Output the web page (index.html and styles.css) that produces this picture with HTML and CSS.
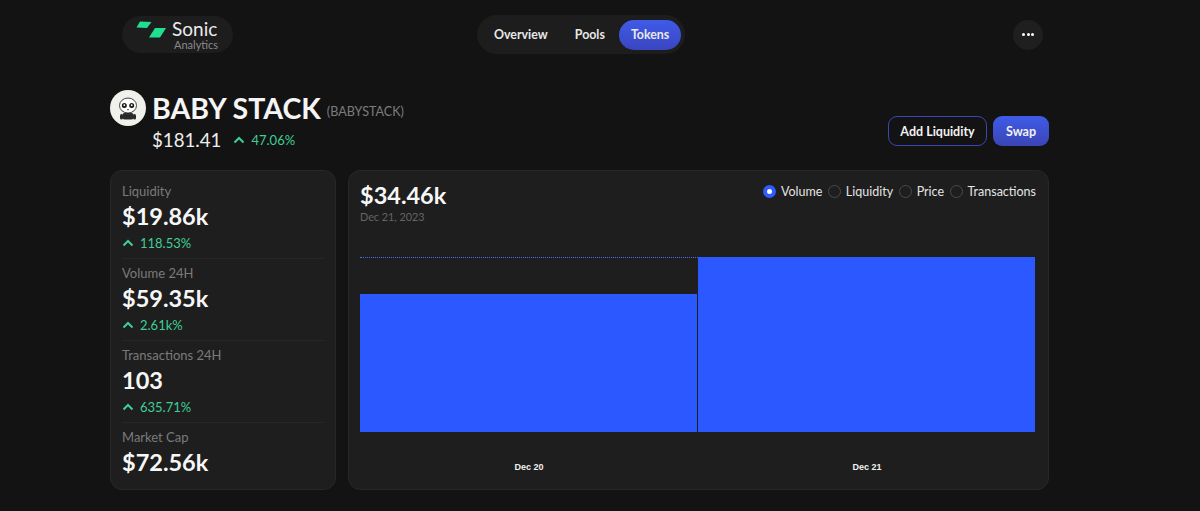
FILE: index.html
```html
<!DOCTYPE html>
<html lang="en">
  <head>
    <meta charset="UTF-8" />
    <meta name="viewport" content="width=device-width, initial-scale=1.0" />
    <title>Sonic Analytics - BABY STACK</title>
    <link rel="stylesheet" href="styles.css">
  </head>
  <body>
    <header class="topbar">
      <a class="logo" href="#">
        <svg class="logo-mark" viewBox="0 0 30 17" width="30" height="17">
          <polygon points="4,0.5 15.5,1 11,7 0.5,6.5" fill="#1fe08f" />
          <polygon points="19,7 30,7 24,16.5 13,16.5" fill="#1fe08f" />
        </svg>
        <span class="logo-text">
          <span class="logo-name">Sonic</span>
          <span class="logo-sub">Analytics</span>
        </span>
      </a>

      <nav class="nav">
        <a href="#" class="nav-item">Overview</a>
        <a href="#" class="nav-item">Pools</a>
        <a href="#" class="nav-item active">Tokens</a>
      </nav>

      <button class="more" aria-label="More">
        <span class="dot"></span><span class="dot"></span><span class="dot"></span>
      </button>
    </header>

    <main class="page">
      <section class="token-head">
        <div>
          <div class="token-title">
            <span class="avatar">
              <svg viewBox="0 0 36 36" width="36" height="36">
                <circle cx="18" cy="18" r="18" fill="#f1f1ec" />
                <rect x="12.5" y="23" width="11" height="6.5" rx="2" fill="#2a2a2a" />
                <rect x="10" y="24" width="3" height="5.5" rx="1.5" fill="#2a2a2a" />
                <rect x="23" y="24" width="3" height="5.5" rx="1.5" fill="#2a2a2a" />
                <ellipse cx="18" cy="15.5" rx="8.5" ry="7.5" fill="#fff" stroke="#444" stroke-width="1" />
                <circle cx="14.3" cy="15.5" r="2.5" fill="#1c1c1c" />
                <circle cx="21.7" cy="15.5" r="2.5" fill="#1c1c1c" />
                <circle cx="14.3" cy="15.2" r="0.9" fill="#fff" />
                <circle cx="21.7" cy="15.2" r="0.9" fill="#fff" />
                <rect x="17.2" y="19" width="1.6" height="1.2" fill="#555" />
              </svg>
            </span>
            <h1>BABY STACK</h1>
            <span class="symbol">(BABYSTACK)</span>
          </div>
          <div class="token-price">
            <span class="price">$181.41</span>
            <span class="change">
              <svg class="chevron" viewBox="0 0 12 8" width="12" height="8"><path d="M1.5 6.5 6 2l4.5 4.5" /></svg>
              47.06%
            </span>
          </div>
        </div>
        <div class="actions">
          <a href="#" class="btn btn-outline">Add Liquidity</a>
          <a href="#" class="btn btn-solid">Swap</a>
        </div>
      </section>

      <section class="content">
        <aside class="card stats">
          <div class="stat">
            <div class="stat-label">Liquidity</div>
            <div class="stat-value">$19.86k</div>
            <div class="change">
              <svg class="chevron" viewBox="0 0 12 8" width="12" height="8"><path d="M1.5 6.5 6 2l4.5 4.5" /></svg>
              118.53%
            </div>
          </div>
          <div class="stat">
            <div class="stat-label">Volume 24H</div>
            <div class="stat-value">$59.35k</div>
            <div class="change">
              <svg class="chevron" viewBox="0 0 12 8" width="12" height="8"><path d="M1.5 6.5 6 2l4.5 4.5" /></svg>
              2.61k%
            </div>
          </div>
          <div class="stat">
            <div class="stat-label">Transactions 24H</div>
            <div class="stat-value">103</div>
            <div class="change">
              <svg class="chevron" viewBox="0 0 12 8" width="12" height="8"><path d="M1.5 6.5 6 2l4.5 4.5" /></svg>
              635.71%
            </div>
          </div>
          <div class="stat">
            <div class="stat-label">Market Cap</div>
            <div class="stat-value">$72.56k</div>
          </div>
        </aside>

        <div class="card chart-card">
          <div class="chart-head">
            <div>
              <div class="chart-value">$34.46k</div>
              <div class="chart-date">Dec 21, 2023</div>
            </div>
            <div class="radios">
              <label class="radio"><span class="radio-dot on"></span>Volume</label>
              <label class="radio"><span class="radio-dot"></span>Liquidity</label>
              <label class="radio"><span class="radio-dot"></span>Price</label>
              <label class="radio"><span class="radio-dot"></span>Transactions</label>
            </div>
          </div>

          <div class="plot">
            <div class="peak-line"></div>
            <div class="bar" style="height: 138px"></div>
            <div class="bar" style="height: 175px"></div>
          </div>
          <div class="axis">
            <span>Dec 20</span>
            <span>Dec 21</span>
          </div>
        </div>
      </section>
    </main>
  </body>
</html>
```

FILE: styles.css
```css
* {
  box-sizing: border-box;
}
body {
  margin: 0;
  padding: 0;
  height: 511px;
  overflow: hidden;
  background-color: #131313;
  color: #f5f5f5;
  font-family: "Lato", "Noto Sans", sans-serif;
}
a {
  color: inherit;
  text-decoration: none;
}
.topbar {
  display: grid;
  grid-template-columns: 355px 536px 30px;
  align-items: center;
  height: 69px;
  padding-left: 122px;
}
.logo {
  display: flex;
  align-items: flex-start;
  gap: 6px;
  width: 111px;
  height: 37px;
  padding: 4px 0 0 14px;
  border-radius: 19px;
  background: #1d1d1d;
}
.logo-mark {
  margin-top: 1px;
}
.logo-text {
  display: flex;
  flex-direction: column;
}
.logo-name {
  font-size: 19px;
  line-height: 18px;
  color: #ececec;
}
.logo-sub {
  font-size: 11px;
  line-height: 11px;
  margin-top: 1px;
  color: #8a8a8a;
  margin-left: 2px;
}
.nav {
  display: flex;
  align-items: center;
  gap: 1px;
  width: 208px;
  height: 39px;
  padding: 0 4px;
  border-radius: 20px;
  background: #1d1d1d;
}
.nav-item {
  display: flex;
  align-items: center;
  justify-content: center;
  height: 30px;
  padding: 0 13px;
  border-radius: 15px;
  font-size: 12.4px;
  font-weight: 700;
  color: #e8e8e8;
}
.active {
  background: linear-gradient(#3f5be8, #3a45c0);
  padding: 0 12px;
}
.more {
  display: flex;
  align-items: center;
  justify-content: center;
  gap: 1.5px;
  width: 30px;
  height: 30px;
  padding: 0;
  border: none;
  border-radius: 50%;
  background: #1f1f1f;
}
.dot {
  width: 3px;
  height: 3px;
  border-radius: 50%;
  background: #fff;
}
.page {
  width: 939px;
  margin: 0 0 0 110px;
}
.token-head {
  display: flex;
  justify-content: space-between;
  height: 77px;
  padding-top: 21px;
}
.token-title {
  display: flex;
  align-items: center;
  gap: 6px;
  height: 36px;
}
.avatar {
  display: block;
  width: 36px;
  height: 36px;
}
h1 {
  margin: 0;
  font-size: 28.5px;
  line-height: 36px;
  font-weight: 700;
  color: #f5f5f5;
}
.symbol {
  margin-top: 6px;
  font-size: 12.6px;
  color: #7c7c7c;
}
.token-price {
  display: flex;
  align-items: center;
  gap: 12px;
  margin: 2px 0 0 42px;
}
.price {
  font-size: 18.7px;
  line-height: 24px;
  color: #eeeeee;
}
.change {
  display: flex;
  align-items: center;
  gap: 6px;
  font-size: 13px;
  line-height: 16px;
  color: #3ecf96;
}
.chevron {
  fill: none;
  stroke: #3ecf96;
  stroke-width: 2;
}
.actions {
  display: flex;
  align-self: flex-end;
  gap: 6px;
}
.btn {
  display: flex;
  align-items: center;
  justify-content: center;
  height: 30px;
  border-radius: 9px;
  font-size: 12.5px;
  font-weight: 700;
  color: #f2f2f2;
}
.btn-outline {
  width: 99px;
  border: 1px solid #3a46b8;
}
.btn-solid {
  width: 56px;
  background: linear-gradient(#3f5be8, #3a45b5);
}
.content {
  display: flex;
  gap: 12px;
  margin-top: 24px;
}
.card {
  height: 320px;
  border: 1px solid #272727;
  border-radius: 12px;
  background: #1e1e1e;
}
.stats {
  width: 226px;
  padding: 6px 11px 0;
}
.stat {
  height: 82px;
  padding-top: 6px;
  border-bottom: 1px solid #272727;
}
.stat:last-child {
  border-bottom: none;
}
.stat-label {
  font-size: 13px;
  line-height: 16px;
  color: #7b7b7b;
}
.stat-value {
  margin-top: 1px;
  font-size: 23.5px;
  line-height: 32px;
  font-weight: 700;
  color: #f7f7f7;
}
.stat .change {
  margin-top: 3px;
}
.chart-card {
  width: 701px;
  padding: 10px 12px 0 11px;
}
.chart-head {
  display: flex;
  justify-content: space-between;
  height: 76px;
}
.chart-value {
  font-size: 23.5px;
  line-height: 28px;
  font-weight: 700;
  color: #f7f7f7;
}
.chart-date {
  margin-top: 1px;
  font-size: 10.8px;
  line-height: 14px;
  color: #656565;
}
.radios {
  display: flex;
  gap: 5.5px;
  height: 20px;
}
.radio {
  display: flex;
  align-items: center;
  gap: 5px;
  font-size: 12.5px;
  color: #e4e4e4;
}
.radio-dot {
  width: 13px;
  height: 13px;
  border: 1px solid #4a4a4a;
  border-radius: 50%;
}
.on {
  border: 4px solid #2f5bff;
  background: #fff;
}
.plot {
  position: relative;
  display: flex;
  align-items: flex-end;
  gap: 1px;
  height: 175px;
  margin-right: 1px;
}
.peak-line {
  position: absolute;
  top: 0;
  left: 0;
  width: 338px;
  border-top: 1px dotted #4a68f0;
}
.bar {
  flex: 1;
  background: #2b59ff;
}
.axis {
  display: flex;
  justify-content: space-around;
  margin-top: 29px;
  font-family: "Liberation Sans", Arial, sans-serif;
  font-size: 9px;
  line-height: 12px;
  font-weight: 700;
  color: #f0f0f0;
}
```
